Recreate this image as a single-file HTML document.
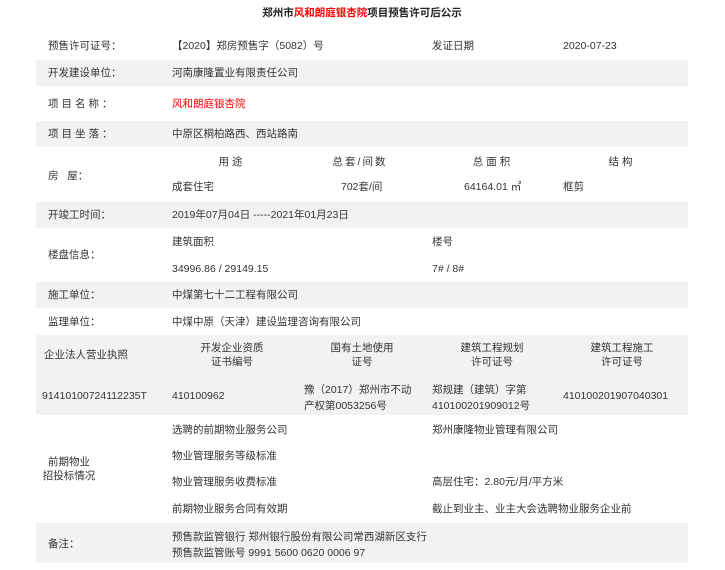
<!DOCTYPE html>
<html><head><meta charset="utf-8"><style>
body{margin:0;width:725px;height:570px;background:#fff;position:relative;font-family:"Liberation Sans","Noto Sans CJK SC",sans-serif;font-size:10.5px;color:#333;overflow:hidden}
.g{position:absolute;left:36px;width:652px;background:#f2f2f2}
.t{position:absolute;white-space:nowrap;line-height:14px;transform:translateY(-7px)}
.c{text-align:center;transform:translate(-50%,-7px)}
.r{color:#f00}
</style></head><body>
<div class="g" style="top:60px;height:26px"></div>
<div class="g" style="top:121px;height:26px"></div>
<div class="g" style="top:202px;height:26px"></div>
<div class="g" style="top:282px;height:26px"></div>
<div class="g" style="top:335px;height:80px"></div>
<div class="g" style="top:523px;height:40px"></div>

<div class="t c" style="left:362px;top:13px;font-weight:bold;font-size:10.5px;color:#222">郑州市<span class="r">风和朗庭银杏院</span>项目预售许可后公示</div>

<div class="t" style="left:48px;top:46px">预售许可证号：</div>
<div class="t" style="left:172px;top:46px">【2020】郑房预售字（5082）号</div>
<div class="t" style="left:432px;top:46px">发证日期</div>
<div class="t" style="left:563px;top:46px">2020-07-23</div>

<div class="t" style="left:48px;top:73px">开发建设单位：</div>
<div class="t" style="left:172px;top:73px">河南康隆置业有限责任公司</div>

<div class="t" style="left:48px;top:104px;letter-spacing:3px">项目名称：</div>
<div class="t r" style="left:172px;top:104px">风和朗庭银杏院</div>

<div class="t" style="left:48px;top:134px;letter-spacing:3px">项目坐落：</div>
<div class="t" style="left:172px;top:134px">中原区桐柏路西、西站路南</div>

<div class="t" style="left:48px;top:176px">房&nbsp;&nbsp;&nbsp;屋：</div>
<div class="t c" style="left:232px;top:162px;letter-spacing:3px">用途</div>
<div class="t c" style="left:360px;top:162px;letter-spacing:2px">总套/间数</div>
<div class="t c" style="left:493px;top:162px;letter-spacing:3px">总面积</div>
<div class="t c" style="left:622px;top:162px;letter-spacing:3px">结构</div>
<div class="t" style="left:172px;top:187px">成套住宅</div>
<div class="t" style="left:341px;top:187px">702套/间</div>
<div class="t" style="left:464px;top:187px">64164.01 ㎡</div>
<div class="t" style="left:563px;top:187px">框剪</div>

<div class="t" style="left:48px;top:215px">开竣工时间：</div>
<div class="t" style="left:172px;top:215px">2019年07月04日 -----2021年01月23日</div>

<div class="t" style="left:48px;top:255px">楼盘信息：</div>
<div class="t" style="left:172px;top:242px">建筑面积</div>
<div class="t" style="left:432px;top:242px">楼号</div>
<div class="t" style="left:172px;top:269px">34996.86 / 29149.15</div>
<div class="t" style="left:432px;top:269px">7# / 8#</div>

<div class="t" style="left:48px;top:295px">施工单位：</div>
<div class="t" style="left:172px;top:295px">中煤第七十二工程有限公司</div>

<div class="t" style="left:48px;top:322px">监理单位：</div>
<div class="t" style="left:172px;top:322px">中煤中原（天津）建设监理咨询有限公司</div>

<div class="t" style="left:44px;top:355px">企业法人营业执照</div>
<div class="t c" style="left:232px;top:355px;line-height:14px;transform:translate(-50%,-14px)">开发企业资质<br>证书编号</div>
<div class="t c" style="left:362px;top:355px;transform:translate(-50%,-14px)">国有土地使用<br>证号</div>
<div class="t c" style="left:492px;top:355px;transform:translate(-50%,-14px)">建筑工程规划<br>许可证号</div>
<div class="t c" style="left:622px;top:355px;transform:translate(-50%,-14px)">建筑工程施工<br>许可证号</div>
<div class="t" style="left:42px;top:396px">91410100724112235T</div>
<div class="t" style="left:172px;top:396px">410100962</div>
<div class="t" style="left:304px;top:396px;transform:translateY(-14px);line-height:16px">豫（2017）郑州市不动<br>产权第0053256号</div>
<div class="t" style="left:432px;top:396px;transform:translateY(-14px);line-height:16px">郑规建（建筑）字第<br>410100201909012号</div>
<div class="t" style="left:563px;top:396px">410100201907040301</div>

<div class="t c" style="left:69px;top:469px;transform:translate(-50%,-14px)">前期物业<br>招投标情况</div>
<div class="t" style="left:172px;top:430px">选聘的前期物业服务公司</div>
<div class="t" style="left:432px;top:430px">郑州康隆物业管理有限公司</div>
<div class="t" style="left:172px;top:456px">物业管理服务等级标准</div>
<div class="t" style="left:172px;top:482px">物业管理服务收费标准</div>
<div class="t" style="left:432px;top:482px">高层住宅：2.80元/月/平方米</div>
<div class="t" style="left:172px;top:509px">前期物业服务合同有效期</div>
<div class="t" style="left:432px;top:509px">截止到业主、业主大会选聘物业服务企业前</div>

<div class="t" style="left:48px;top:544px">备注：</div>
<div class="t" style="left:172px;top:544px;transform:translateY(-15px);line-height:16px">预售款监管银行 郑州银行股份有限公司常西湖新区支行<br>预售款监管账号 9991 5600 0620 0006 97</div>
</body></html>
